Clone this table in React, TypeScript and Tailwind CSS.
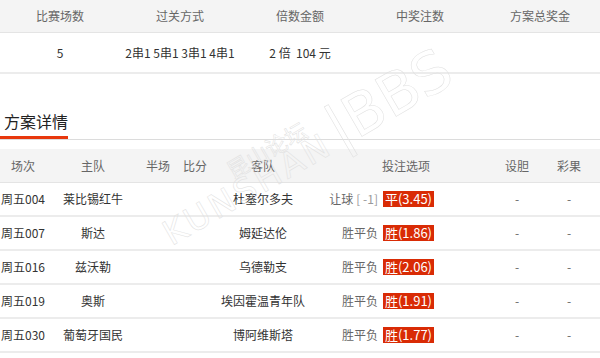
import React from 'react';

const summary = [
  { label: '比赛场数', value: '5' },
  { label: '过关方式', value: '2串1 5串1 3串1 4串1' },
  { label: '倍数金额', value: '2 倍  104 元' },
  { label: '中奖注数', value: '' },
  { label: '方案总奖金', value: '' },
];

const matches = [
  { no: '周五004', home: '莱比锡红牛', away: '杜塞尔多夫', play: '让球', handicap: '[ -1]', pick: '平(3.45)' },
  { no: '周五007', home: '斯达', away: '姆延达伦', play: '胜平负', handicap: '', pick: '胜(1.86)' },
  { no: '周五016', home: '兹沃勒', away: '乌德勒支', play: '胜平负', handicap: '', pick: '胜(2.06)' },
  { no: '周五019', home: '奥斯', away: '埃因霍温青年队', play: '胜平负', handicap: '', pick: '胜(1.91)' },
  { no: '周五030', home: '葡萄牙国民', away: '博阿维斯塔', play: '胜平负', handicap: '', pick: '胜(1.77)' },
];

const cols = 'grid grid-cols-[46px_94px_36px_38px_98px_184px_42px_62px]';

const App: React.FC = () => {
  return (
    <div className="relative w-[600px] h-[358px] overflow-hidden bg-white text-[12px] text-[#333] font-['Noto_Sans_CJK_SC','Microsoft_YaHei',sans-serif]">
      {/* Summary */}
      <div className="grid grid-cols-5 h-[33px] bg-[#f4f4f4] border-b border-[#e4e4e4] text-[#666]">
        {summary.map((s) => (
          <div key={s.label} className="flex items-center justify-center">{s.label}</div>
        ))}
      </div>
      <div className="grid grid-cols-5 h-[41px] border-b-2 border-[#ececec]">
        {summary.map((s) => (
          <div key={s.label} className="flex items-center justify-center whitespace-pre">{s.value}</div>
        ))}
      </div>

      {/* Section title */}
      <div className="h-[66px] flex items-end border-b border-[#dcdcdc]">
        <div className="w-[68px] pl-[4px] pb-[4px] border-b-[3px] border-[#e8380d] text-[16px] leading-[22px] text-[#222]">
          方案详情
        </div>
      </div>

      {/* Detail table */}
      <div className="mt-[9px]">
        <div className={`${cols} h-[34px] bg-[#f4f4f4] border-b border-[#e4e4e4] text-[#666] items-center text-center`}>
          <div>场次</div>
          <div>主队</div>
          <div>半场</div>
          <div>比分</div>
          <div>客队</div>
          <div className="pl-[4px]">投注选项</div>
          <div>设胆</div>
          <div>彩果</div>
        </div>
        {matches.map((m) => (
          <div key={m.no} className={`${cols} h-[34px] border-b-2 border-[#ececec] items-center text-center`}>
            <div className="whitespace-nowrap">{m.no}</div>
            <div>{m.home}</div>
            <div></div>
            <div></div>
            <div className="whitespace-nowrap">{m.away}</div>
            <div className="flex items-center justify-end pr-[62px] gap-[4px] whitespace-nowrap">
              <span className="text-[#666]">{m.play}</span>
              {m.handicap && <span className="text-[#999] -ml-[1px]">{m.handicap}</span>}
              <span className="ml-[1px] px-[2px] h-[16px] leading-[16px] bg-[#d92b05] text-white text-[13px]">{m.pick}</span>
            </div>
            <div className="text-[#666]">-</div>
            <div className="text-[#666]">-</div>
          </div>
        ))}
      </div>

      {/* Watermark */}
      <div className="pointer-events-none absolute left-[176px] top-[196px] origin-bottom-left -rotate-[30deg] leading-none text-transparent [-webkit-text-stroke:0.5px_#e0e0e0] font-['DejaVu_Sans',sans-serif] whitespace-nowrap">
        <span className="text-[34px] tracking-[3px]">KUNSHAN</span>
        <span className="text-[58px] ml-[6px]">|BBS</span>
      </div>
      <div className="pointer-events-none absolute left-[228px] top-[160px] origin-left -rotate-[30deg] leading-none text-transparent [-webkit-text-stroke:0.5px_#e0e0e0] text-[22px] whitespace-nowrap">
        昆山论坛
      </div>
    </div>
  );
};

export default App;
